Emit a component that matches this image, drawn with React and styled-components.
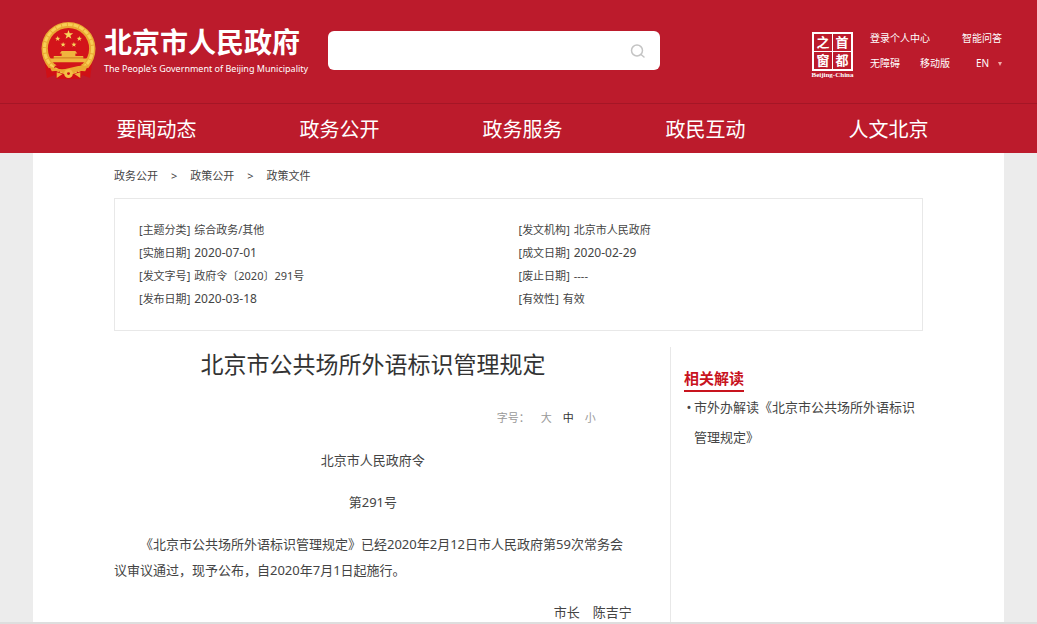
import React from "react";
import styled, { createGlobalStyle } from "styled-components";

const nav = ["要闻动态", "政务公开", "政务服务", "政民互动", "人文北京"];

const crumbs = ["政务公开", "政策公开", "政策文件"];

const details = [
  { label: "主题分类", value: "综合政务/其他" },
  { label: "发文机构", value: "北京市人民政府" },
  { label: "实施日期", date: "2020-07-01" },
  { label: "成文日期", date: "2020-02-29" },
  { label: "发文字号", value: "政府令〔2020〕291号" },
  { label: "废止日期", value: "----" },
  { label: "发布日期", date: "2020-03-18" },
  { label: "有效性", value: "有效" },
];

const STAR = "M0-1 .235-.324 .951-.309 .38 .124 .588 .809 0 .4-.588 .809-.38 .124-.951-.309-.235-.324Z";

function Emblem() {
  return (
    <EmblemSvg viewBox="0 0 56 60" aria-hidden="true">
      <path d="M4 42H52L50 57 42 54 40 58H16L14 54 6 57Z" fill="#cf1016" />
      <path
        d="M28 0A27.500 27 0 0 1 55.500 27Q55.500 38 48 47L40 44H16L8 47Q.5 38 .5 27A27.500 27 0 0 1 28 0Z"
        fill="#eba832"
      />
      <circle
        cx="28"
        cy="27"
        r="24.500"
        fill="none"
        stroke="#f7cf55"
        strokeWidth="3"
        strokeDasharray="5 1"
      />
      <circle cx="28" cy="27" r="21" fill="#d3141a" />
      <g fill="#f8d65c">
        <path d={STAR} transform="translate(28 13) scale(5)" />
        <path d={STAR} transform="translate(17 17) scale(2.8)" />
        <path d={STAR} transform="translate(39 17) scale(2.8)" />
        <path d={STAR} transform="translate(22.5 23) scale(2.8)" />
        <path d={STAR} transform="translate(33.5 23) scale(2.8)" />
      </g>
      <path d="M21 29.500H35L37 32H35V34.500H43V37H47L45 41H11L9 37H13V34.500H21V32H19Z" fill="#f0b53e" />
      <path d="M13 36.500H43" stroke="#cf7a20" strokeWidth="1" />
      <path d="M8 44Q18 50 28 47T48 44L45 50Q36 49 33 53H23Q20 49 11 50Z" fill="#eba832" />
      <path d="M16 51 22 53 16 57ZM40 51 34 53 40 57Z" fill="#f0b53e" />
      <circle cx="28" cy="52.500" r="4.500" fill="#f3c046" />
      <circle cx="28" cy="52.500" r="1.500" fill="#cf1016" />
    </EmblemSvg>
  );
}

export default function App() {
  return (
    <Page>
      <GlobalStyle />
      <Scroller>
        <Header>
          <Brand href="#">
            <Emblem />
            <BrandText>
              <BrandName>北京市人民政府</BrandName>
              <BrandSub>The People's Government of Beijing Municipality</BrandSub>
            </BrandText>
          </Brand>
          <Search role="search">
            <SearchInput type="text" aria-label="搜索" />
            <SearchButton type="button" aria-label="搜索">
              <svg width="16" height="16" viewBox="0 0 16 16" fill="none" stroke="#c4c4c4" strokeWidth="1.5">
                <circle cx="7" cy="7.500" r="5.500" />
                <path d="M11 11.500 14 14" strokeLinecap="round" />
              </svg>
            </SearchButton>
          </Search>
          <Tools>
            <Seal href="#">
              <SealGrid>
                <SealChar>之</SealChar>
                <SealChar>首</SealChar>
                <SealChar>窗</SealChar>
                <SealChar>都</SealChar>
              </SealGrid>
              <SealName>Beijing-China</SealName>
            </Seal>
            <ToolLinks>
              <ToolRow>
                <ToolLink href="#">登录个人中心</ToolLink>
                <ToolLink href="#">智能问答</ToolLink>
              </ToolRow>
              <ToolRow>
                <ToolGroup>
                  <ToolLink href="#">无障碍</ToolLink>
                  <ToolLink href="#">移动版</ToolLink>
                </ToolGroup>
                <Language>
                  <LanguageSelect aria-label="语言" defaultValue="en">
                    <option value="en">EN</option>
                  </LanguageSelect>
                  <svg width="4" height="4" viewBox="0 0 4 4" aria-hidden="true">
                    <path d="M0 0h4L2 4Z" fill="#f0aca6" />
                  </svg>
                </Language>
              </ToolRow>
            </ToolLinks>
          </Tools>
        </Header>
        <NavBar>
          <NavList>
            {nav.map((item) => (
              <NavLink href="#" key={item}>
                {item}
              </NavLink>
            ))}
          </NavList>
        </NavBar>
        <Main>
          <Breadcrumb>
            {crumbs.map((crumb, i) => (
              <React.Fragment key={crumb}>
                {i > 0 && <span>&gt;</span>}
                <a href="#">{crumb}</a>
              </React.Fragment>
            ))}
          </Breadcrumb>
          <Details>
            {details.map(({ label, value, date }) => (
              <Detail key={label}>
                <span>[{label}]</span>
                {date ? <DetailDate dateTime={date}>{date}</DetailDate> : <span>{value}</span>}
              </Detail>
            ))}
          </Details>
          <Columns>
            <Article>
              <Title>北京市公共场所外语标识管理规定</Title>
              <FontSize>
                <span>字号：</span>
                <SizeButton type="button">大</SizeButton>
                <SizeButton type="button" $active>
                  中
                </SizeButton>
                <SizeButton type="button">小</SizeButton>
              </FontSize>
              <Paragraph $align="center">北京市人民政府令</Paragraph>
              <Paragraph $align="center">第291号</Paragraph>
              <Paragraph $indent>
                《北京市公共场所外语标识管理规定》已经2020年2月12日市人民政府第59次常务会议审议通过，现予公布，自2020年7月1日起施行。
              </Paragraph>
              <Paragraph $align="right">市长　陈吉宁</Paragraph>
            </Article>
            <Aside>
              <AsideTitle>相关解读</AsideTitle>
              <AsideList>
                <AsideItem>
                  <a href="#">市外办解读《北京市公共场所外语标识管理规定》</a>
                </AsideItem>
              </AsideList>
            </Aside>
          </Columns>
        </Main>
      </Scroller>
      <BottomLine />
    </Page>
  );
}

const GlobalStyle = createGlobalStyle`
  * {
    box-sizing: border-box;
  }
  body {
    margin: 0;
    background: #ececec;
    color: #444;
    font-family: "Noto Sans", "Noto Sans CJK SC", sans-serif;
  }
  a {
    color: inherit;
    text-decoration: none;
  }
  button, input, select {
    font-family: inherit;
    border: 0;
    padding: 0;
    background: none;
  }
`;
const Page = styled.div`
  height: 100vh;
  display: flex;
  flex-direction: column;
`;
const Scroller = styled.div`
  flex: 1;
  min-height: 0;
  overflow-y: auto;
  scrollbar-width: none;
`;
const Header = styled.header`
  height: 104px;
  display: flex;
  align-items: flex-start;
  padding: 22px 35px 0 41px;
  background: #bc1b2c;
  border-bottom: 1px solid #a51626;
  color: #fff;
`;
const Brand = styled.a`
  display: flex;
  gap: 8px;
  width: 287px;
  flex-shrink: 0;
`;
const EmblemSvg = styled.svg`
  width: 55px;
  height: 59px;
`;
const BrandText = styled.span`
  display: flex;
  flex-direction: column;
  white-space: nowrap;
`;
const BrandName = styled.strong`
  font-size: 28px;
  line-height: 40px;
`;
const BrandSub = styled.span`
  font-size: 9px;
  line-height: 14px;
`;
const Search = styled.form`
  display: flex;
  align-items: center;
  width: 332px;
  height: 39px;
  margin-top: 9px;
  padding-right: 14px;
  background: #fff;
  border-radius: 6px;
`;
const SearchInput = styled.input`
  flex: 1;
  height: 100%;
  padding-left: 14px;
  font-size: 13px;
  outline: none;
`;
const SearchButton = styled.button`
  display: flex;
  cursor: pointer;
`;
const Tools = styled.div`
  display: flex;
  gap: 16px;
  margin-left: auto;
`;
const Seal = styled.a`
  display: flex;
  flex-direction: column;
  align-items: center;
  width: 43px;
  margin-top: 10px;
`;
const SealGrid = styled.span`
  display: grid;
  grid-template-columns: 1fr 1fr;
  gap: 1px;
  width: 41px;
  height: 39px;
  border: 2px solid #fff;
  background: #fff;
`;
const SealChar = styled.span`
  background: #bc1b2c;
  font-size: 13px;
  font-weight: bold;
  line-height: 17px;
  text-align: center;
`;
const SealName = styled.span`
  font-family: "Liberation Serif", serif;
  font-size: 7px;
  font-weight: bold;
  line-height: 8px;
  white-space: nowrap;
`;
const ToolLinks = styled.div`
  width: 132px;
  padding-top: 4px;
  font-size: 10px;
`;
const ToolRow = styled.div`
  display: flex;
  justify-content: space-between;
  line-height: 25px;
`;
const ToolGroup = styled.div`
  display: flex;
  gap: 20px;
`;
const ToolLink = styled.a`
  white-space: nowrap;
`;
const Language = styled.div`
  display: flex;
  align-items: center;
  gap: 8px;
`;
const LanguageSelect = styled.select`
  appearance: none;
  color: #fff;
  font-size: 10px;
  line-height: 25px;
  outline: none;
`;
const NavBar = styled.nav`
  background: #bc1b2c;
`;
const NavList = styled.div`
  display: grid;
  grid-template-columns: repeat(5, 1fr);
  max-width: 923px;
  margin: 0 auto;
  padding: 2px 0 0 8px;
`;
const NavLink = styled.a`
  color: #fff;
  font-size: 20px;
  line-height: 47px;
  text-align: center;
`;
const Main = styled.main`
  width: calc(100% - 66px);
  max-width: 971px;
  margin: 0 auto;
  padding: 0 81px;
  background: #fff;
`;
const Breadcrumb = styled.nav`
  display: flex;
  gap: 13px;
  font-size: 11px;
  line-height: 45px;
`;
const Details = styled.ul`
  display: grid;
  grid-template-columns: 1fr 1fr;
  align-content: start;
  min-height: 133px;
  margin: 0;
  padding: 19px 24px;
  list-style: none;
  border: 1px solid #e8e8e8;
  font-size: 11px;
  line-height: 23px;
`;
const Detail = styled.li`
  display: flex;
  align-items: baseline;
  gap: 4px;
  height: 23px;
`;
const DetailDate = styled.time`
  font-size: 12px;
`;
const Columns = styled.div`
  display: flex;
  justify-content: space-between;
  min-height: calc(100vh - 346px);
  padding-top: 0;
  margin-top: 16px;
`;
const Article = styled.article`
  width: 64%;
`;
const Title = styled.h1`
  margin: 0 0 26px;
  color: #333;
  font-size: 23px;
  font-weight: normal;
  line-height: 34px;
  text-align: center;
`;
const FontSize = styled.div`
  display: flex;
  justify-content: flex-end;
  gap: 11px;
  padding-right: 36px;
  margin-bottom: 18px;
  color: #999;
  font-size: 11px;
  line-height: 22px;
`;
const SizeButton = styled.button`
  color: ${(props) => (props.$active ? "#333" : "#999")};
  font-size: 11px;
  line-height: 22px;
  cursor: pointer;
`;
const Paragraph = styled.p`
  margin: 0 0 16px;
  font-size: 13px;
  line-height: 26px;
  text-align: ${(props) => props.$align || "left"};
  text-indent: ${(props) => (props.$indent ? "2em" : "0")};
`;
const Aside = styled.aside`
  width: 253px;
  padding: 19px 0 0 13px;
  border-left: 1px solid #e8e8e8;
`;
const AsideTitle = styled.h2`
  display: inline-block;
  margin: 0;
  border-bottom: 2px solid #c8141e;
  color: #c8141e;
  font-size: 15px;
  line-height: 24px;
  vertical-align: top;
`;
const AsideList = styled.ul`
  margin: 0;
  padding: 0;
  list-style: none;
`;
const AsideItem = styled.li`
  display: flex;
  font-size: 13px;
  line-height: 30px;

  &:before {
    content: "•";
    flex: 0 0 10px;
    text-align: center;
  }
`;
const BottomLine = styled.footer`
  height: 2px;
  background: #dedede;
`;
